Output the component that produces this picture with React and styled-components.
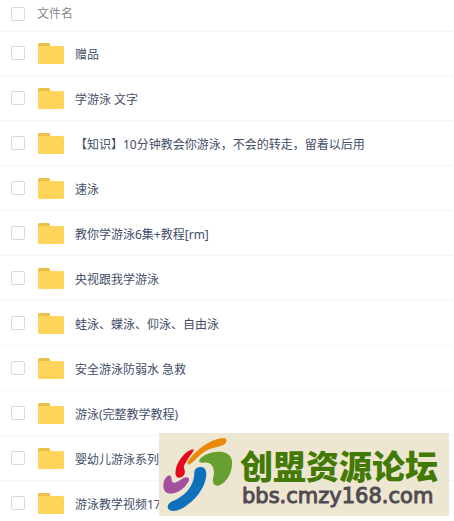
import React, { useState } from 'react';
import styled, { createGlobalStyle } from 'styled-components';

const files = [
  '赠品',
  '学游泳 文字',
  '【知识】10分钟教会你游泳，不会的转走，留着以后用',
  '速泳',
  '教你学游泳6集+教程[rm]',
  '央视跟我学游泳',
  '蛙泳、蝶泳、仰泳、自由泳',
  '安全游泳防弱水 急救',
  '游泳(完整教学教程)',
  '婴幼儿游泳系列',
  '游泳教学视频17',
];

const FolderIcon = () => (
  <Folder viewBox="0 0 26 21" aria-hidden="true">
    <path d="M0 5V1.5Q0 0 1.5 0H10.5Q12 0 12 1.5V5Z" fill="#edbe4a" />
    <rect y="3" width="26" height="18" rx="1.5" fill="#ffd45b" />
  </Folder>
);

const ForumLogo = () => (
  <Logo viewBox="0 9 225 240" aria-hidden="true">
    <path
      d="M84 104C78 98 92 81 104 70C125 47 162 25 190 24C203 24 202 37 192 44C177 51 149 53 131 67C113 79 97 102 84 104Z"
      fill="#eb8a08"
    />
    <path
      d="M100 58C104 64 90 75 82 90C77 99 68 108 73 117C79 132 68 143 58 143C48 143 45 133 47 122C50 94 79 60 100 58Z"
      fill="#e60a1c"
    />
    <path
      d="M118 96C115 83 145 64 180 65C207 66 219 82 216 107C213 139 189 168 171 167C156 165 157 151 161 138C164 120 160 107 148 100C138 95 126 101 118 96Z"
      fill="#66a032"
    />
    <path
      d="M27 136C40 138 30 153 40 158C53 161 67 140 82 142C92 145 87 155 77 167C60 187 35 195 20 188C4 180 8 143 27 136Z"
      fill="#a4509f"
    />
    <path
      d="M122 111C137 111 141 125 138 142C133 178 102 215 70 233C48 246 24 247 23 230C24 214 46 213 61 201C87 184 103 157 103 128C104 116 112 111 122 111Z"
      fill="#0f70bc"
    />
  </Logo>
);

const App = () => {
  const [selected, setSelected] = useState([]);
  const allSelected = selected.length === files.length;

  const toggleAll = () => {
    setSelected(allSelected ? [] : files);
  };

  const toggleFile = (name) => {
    setSelected((prev) =>
      prev.includes(name) ? prev.filter((item) => item !== name) : [...prev, name]
    );
  };

  return (
    <>
      <GlobalStyle />
      <Page>
        <FileTable>
          <thead>
            <tr>
              <HeadCheckCell>
                <Checkbox
                  type="checkbox"
                  aria-label="全选"
                  checked={allSelected}
                  onChange={toggleAll}
                />
              </HeadCheckCell>
              <HeadCell scope="col">文件名</HeadCell>
            </tr>
          </thead>
          <tbody>
            {files.map((name, index) => (
              <tr key={name}>
                <CheckCell>
                  <Checkbox
                    type="checkbox"
                    id={`file-${index}`}
                    checked={selected.includes(name)}
                    onChange={() => toggleFile(name)}
                  />
                </CheckCell>
                <NameCell>
                  <FileLabel htmlFor={`file-${index}`}>
                    <FolderIcon />
                    <FileName>{name}</FileName>
                  </FileLabel>
                </NameCell>
              </tr>
            ))}
          </tbody>
        </FileTable>

        <Watermark>
          <ForumLogo />
          <WatermarkText>
            <ForumName>创盟资源论坛</ForumName>
            <ForumDomain>bbs.cmzy168.com</ForumDomain>
          </WatermarkText>
        </Watermark>
      </Page>
    </>
  );
};

// Styled Components
const GlobalStyle = createGlobalStyle`
  * {
    box-sizing: border-box;
  }

  body {
    margin: 0;
    background: #fff;
    font-family: 'Noto Sans', 'Noto Sans CJK SC', sans-serif;
    font-size: 12px;
    line-height: 16px;
  }
`;

const Page = styled.main`
  position: relative;
  height: 100vh;
  overflow: hidden;
`;

const FileTable = styled.table`
  width: 100%;
  border-spacing: 0;
`;

const CheckCell = styled.td`
  width: 37px;
  height: 45px;
  padding: 0 0 0 11px;
  border-bottom: 1px solid #f2f6fd;
`;

const NameCell = styled.td`
  padding: 0;
  border-bottom: 1px solid #f2f6fd;
`;

const HeadCheckCell = styled.td`
  height: 31px;
  padding: 0 0 4px 11px;
  box-shadow: 0 1px 0 #f2f6fd;
`;

const HeadCell = styled.th`
  padding: 0 0 4px;
  color: #888;
  font-weight: 400;
  text-align: left;
  box-shadow: 0 1px 0 #f2f6fd;
`;

const Checkbox = styled.input`
  appearance: none;
  display: block;
  width: 14px;
  height: 14px;
  margin: 0;
  border: 1px solid #d4dbe5;
  border-radius: 2px;
  background: #fff;
  cursor: pointer;

  &:checked {
    border-color: #3b8cff;
    background: #3b8cff;
  }
`;

const FileLabel = styled.label`
  display: flex;
  align-items: center;
  gap: 11px;
  padding-left: 1px;
  cursor: pointer;
`;

const Folder = styled.svg`
  flex: none;
  width: 26px;
  height: 21px;
`;

const FileName = styled.span`
  padding-top: 3px;
  color: #424e67;
  white-space: nowrap;
`;

const Watermark = styled.aside`
  position: absolute;
  right: 5px;
  bottom: 5px;
  display: flex;
  width: 290px;
  height: 83px;
  padding-left: 1px;
  gap: 5px;
  background: #ede6d1;
`;

const Logo = styled.svg`
  flex: none;
  width: 75px;
  height: 80px;
`;

const WatermarkText = styled.div`
  padding-top: 14px;
  white-space: nowrap;
`;

const ForumName = styled.div`
  color: #437a05;
  font-family: 'Noto Sans CJK SC', sans-serif;
  font-size: 33px;
  font-weight: 900;
  line-height: 36px;
`;

const ForumDomain = styled.div`
  padding-left: 2px;
  color: #514c52;
  font-family: 'DejaVu Sans', sans-serif;
  font-size: 21px;
  line-height: 26px;
  -webkit-text-stroke: 1px #514c52;
`;

export default App;
